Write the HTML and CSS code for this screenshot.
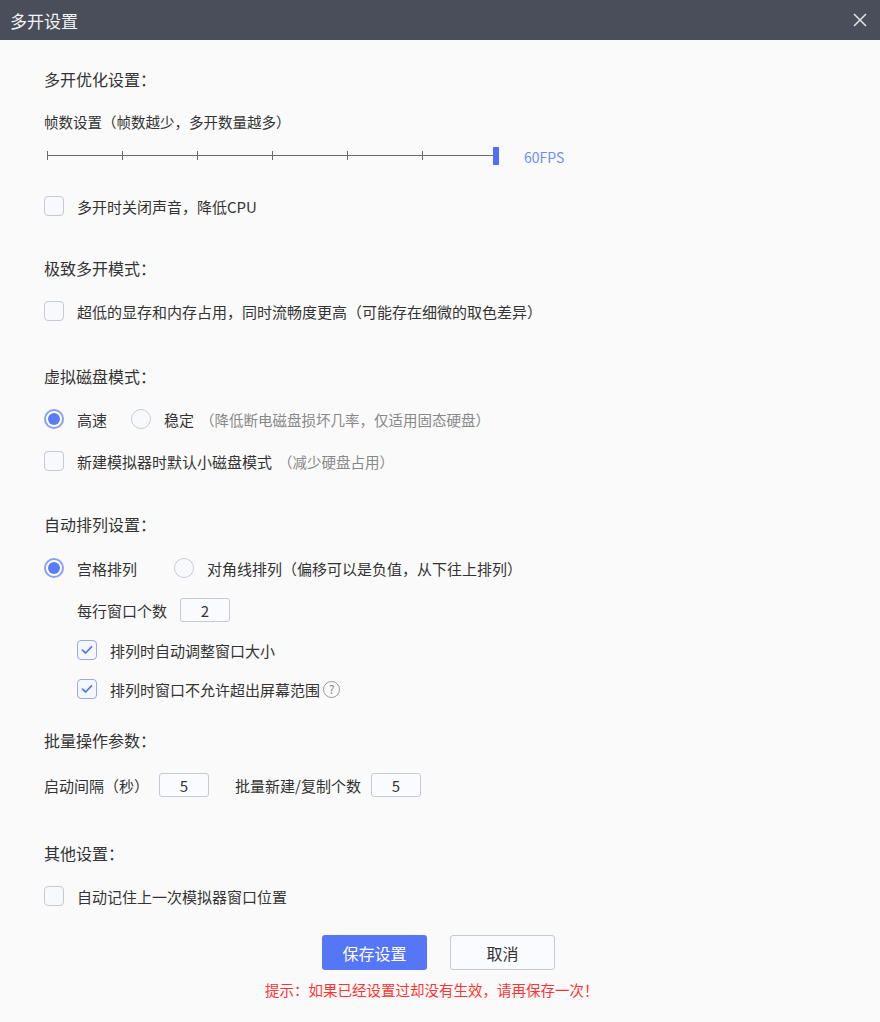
FILE: index.html
```html
<!DOCTYPE html>
<html lang="zh-CN">
<head>
<meta charset="utf-8">
<title>多开设置</title>
<link rel="stylesheet" href="styles.css">
</head>
<body>
<div class="window">
  <div class="titlebar">
    <span class="title">多开设置</span>
    <svg class="close" width="14" height="14" viewBox="0 0 14 14"><path d="M1 1L13 13M13 1L1 13" stroke="#e4e5ea" stroke-width="1.5" fill="none"/></svg>
  </div>
  <div class="content">
    <div class="section first">
      <div class="row heading">多开优化设置：</div>
      <div class="row sub">帧数设置（帧数越少，多开数量越多）</div>
      <div class="row slider-row">
        <div class="slider">
          <div class="track"></div>
          <span class="tick k0"></span><span class="tick k1"></span><span class="tick k2"></span><span class="tick k3"></span><span class="tick k4"></span><span class="tick k5"></span>
          <span class="handle"></span>
        </div>
        <span class="fps">60FPS</span>
      </div>
      <div class="row after-slider"><span class="cb"></span><span class="label">多开时关闭声音，降低CPU</span></div>
    </div>

    <div class="section s2">
      <div class="row heading">极致多开模式：</div>
      <div class="row r13"><span class="cb"></span><span class="label">超低的显存和内存占用，同时流畅度更高（可能存在细微的取色差异）</span></div>
    </div>

    <div class="section s3">
      <div class="row heading">虚拟磁盘模式：</div>
      <div class="row r13">
        <span class="radio on"></span><span class="label">高速</span>
        <span class="radio gap1"></span><span class="label">稳定</span><span class="hint">（降低断电磁盘损坏几率，仅适用固态硬盘）</span>
      </div>
      <div class="row"><span class="cb"></span><span class="label">新建模拟器时默认小磁盘模式</span><span class="hint">（减少硬盘占用）</span></div>
    </div>

    <div class="section s4">
      <div class="row heading">自动排列设置：</div>
      <div class="row r14">
        <span class="radio on"></span><span class="label">宫格排列</span>
        <span class="radio gap2"></span><span class="label">对角线排列（偏移可以是负值，从下往上排列）</span>
      </div>
      <div class="row indent"><span class="text">每行窗口个数</span><span class="input in1">2</span></div>
      <div class="row indent r10"><span class="cb checked"><svg width="12" height="10" viewBox="0 0 12 10"><path d="M1.5 5.2L4.6 8L10.5 1.8" stroke="#5a78f0" stroke-width="1.8" fill="none" stroke-linecap="round" stroke-linejoin="round"/></svg></span><span class="label">排列时自动调整窗口大小</span></div>
      <div class="row indent r9"><span class="cb checked"><svg width="12" height="10" viewBox="0 0 12 10"><path d="M1.5 5.2L4.6 8L10.5 1.8" stroke="#5a78f0" stroke-width="1.8" fill="none" stroke-linecap="round" stroke-linejoin="round"/></svg></span><span class="label">排列时窗口不允许超出屏幕范围</span><span class="help">?</span></div>
    </div>

    <div class="section s5">
      <div class="row heading">批量操作参数：</div>
      <div class="row r15"><span class="text">启动间隔（秒）</span><span class="input in2">5</span><span class="text lbl2">批量新建/复制个数</span><span class="input in3">5</span></div>
    </div>

    <div class="section s6">
      <div class="row heading">其他设置：</div>
      <div class="row r13"><span class="cb"></span><span class="label">自动记住上一次模拟器窗口位置</span></div>
    </div>

    <div class="buttons">
      <button class="btn primary">保存设置</button>
      <button class="btn cancel">取消</button>
    </div>
    <div class="warn">提示：如果已经设置过却没有生效，请再保存一次！</div>
  </div>
</div>
</body>
</html>
```
FILE: styles.css
```css
* { box-sizing: border-box; }
html, body { margin: 0; padding: 0; }
body {
  width: 880px;
  height: 1022px;
  overflow: hidden;
  font-family: "Noto Sans CJK SC", "Noto Sans", "Liberation Sans", sans-serif;
  color: #333;
  background: #fafafa;
}
.window { width: 880px; height: 1022px; display: flex; flex-direction: column; }
.titlebar {
  height: 40px;
  background: #4a4d5a;
  display: flex;
  align-items: center;
  justify-content: space-between;
  padding: 0 13px 0 10px;
  flex: none;
}
.title { color: #f2f3f5; font-size: 17px; }
.close { display: block; }
.content { padding: 24px 0 0 44px; flex: 1; }
.section { display: flex; flex-direction: column; }
.s2 { margin-top: 32px; }
.s3 { margin-top: 35px; }
.s4 { margin-top: 33px; }
.s5 { margin-top: 21px; }
.s6 { margin-top: 38px; }
.row {
  height: 30px;
  display: flex;
  align-items: center;
  margin-top: 12px;
  font-size: 15px;
}
.section .row:first-child { margin-top: 0; }
.heading { font-size: 16px; color: #333; }
.sub { font-size: 14.5px; }
.slider-row { margin-top: 4px; }
.after-slider { margin-top: 21px; }
.r13 { margin-top: 13px; }
.r14 { margin-top: 14px; }
.r10 { margin-top: 10px; }
.r9 { margin-top: 9px; }
.r15 { margin-top: 15px; }
.indent { padding-left: 33px; }

.slider { position: relative; width: 452px; height: 20px; margin-left: 3px; }
.track { position: absolute; left: 0; top: 10px; width: 449px; height: 1px; background: #6b6b6b; }
.tick { position: absolute; top: 6px; width: 1px; height: 9px; background: #6b6b6b; }
.k0 { left: 0; } .k1 { left: 75px; } .k2 { left: 150px; } .k3 { left: 225px; } .k4 { left: 300px; } .k5 { left: 375px; }
.handle { position: absolute; left: 446px; top: 2px; width: 6px; height: 18px; background: #4f6ef7; border-radius: 1px; }
.fps { margin-left: 25px; color: #6f8ef5; font-size: 14px; margin-top: 4px; }

.cb {
  width: 20px; height: 20px;
  border: 1px solid #c6c9d6;
  border-radius: 4px;
  background: #f8f9fd;
  flex: none;
  display: flex; align-items: center; justify-content: center;
}
.cb.checked { border-color: #9aa9ea; background: #f5f7ff; }
.label { margin-left: 13px; }
.radio {
  width: 20px; height: 20px;
  border: 1px solid #c9ccd8;
  border-radius: 50%;
  background: #f8f9fd;
  flex: none;
  position: relative;
}
.radio.on { border: 2px solid #8aa0f5; background: #fff; }
.radio.on::after {
  content: "";
  position: absolute;
  left: 2px; top: 2px;
  width: 12px; height: 12px;
  border-radius: 50%;
  background: #5b7cf7;
}
.gap1 { margin-left: 24px; }
.gap2 { margin-left: 37px; }
.hint { color: #888; font-size: 14.5px; margin-left: 6px; }
.text { font-size: 15px; }
.input {
  height: 24px;
  border: 1px solid #c6c9d6;
  border-radius: 3px;
  background: #fafbff;
  display: flex; align-items: center; justify-content: center;
  font-size: 15px;
  color: #333;
}
.in1 { width: 50px; margin-left: 13px; }
.in2 { width: 50px; margin-left: 10px; }
.lbl2 { margin-left: 26px; }
.in3 { width: 50px; margin-left: 10px; }
.help {
  width: 17px; height: 17px;
  border: 1px solid #999;
  border-radius: 50%;
  font-size: 12px;
  color: #888;
  display: flex; align-items: center; justify-content: center;
  margin-left: 3px;
  line-height: 1;
}

.buttons { display: flex; justify-content: flex-start; margin-top: 24px; padding-left: 278px; gap: 23px; }
.btn {
  width: 105px; height: 35px;
  font-family: inherit;
  font-size: 16px;
  border-radius: 3px;
  cursor: pointer;
  padding: 0;
}
.primary { background: #5576f7; color: #fff; border: none; }
.cancel { background: #fafbff; color: #333; border: 1px solid #c6c9d6; }
.warn { margin-top: 9px; padding-left: 221px; color: #f33; font-size: 14.5px; height: 22px; line-height: 22px; }
```
